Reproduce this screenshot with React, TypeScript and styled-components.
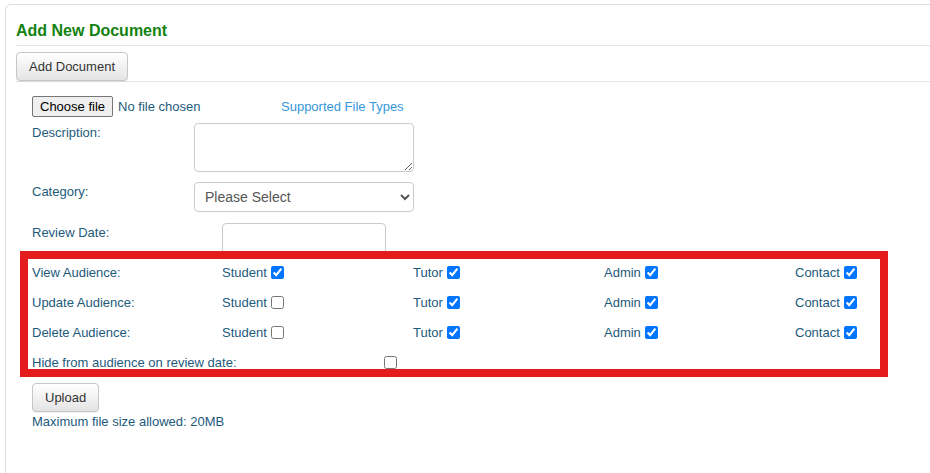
import styled, {createGlobalStyle} from "styled-components";

const GlobalStyle = createGlobalStyle`
    html, body {
        margin: 0;
        padding: 0;
        background: #fff;
        overflow: hidden;
    }

    body {
        font-family: "Liberation Sans", Arial, sans-serif;
        font-size: 13px;
        color: #1d5a7c;
    }
`;

const Panel = styled.div`
    margin: 4px -20px 0 5px;
    min-height: 480px;
    border: 1px solid #dddddd;
    border-radius: 6px;
    background: #fff;
`;

const Header = styled.div`
    margin-left: 10px;
    padding: 17px 0 5px;
    border-bottom: 1px solid #e5e5e5;
`;

const Title = styled.h2`
    margin: 0;
    font-size: 16px;
    line-height: 18px;
    font-weight: 700;
    color: #13820f;
`;

const Toolbar = styled.div`
    margin-left: 10px;
    padding-top: 6px;
    border-bottom: 1px solid #e5e5e5;
    line-height: 0;
`;

const Button = styled.button`
    font-family: "Liberation Sans", Arial, sans-serif;
    font-size: 13px;
    line-height: 15px;
    color: #333;
    padding: 6px 12px;
    border: 1px solid #c6c6c6;
    border-radius: 4px;
    background: linear-gradient(#ffffff, #e4e4e4);
    box-shadow: 0 1px 1px rgba(0, 0, 0, 0.06);
    cursor: pointer;
`;

const Form = styled.form`
    padding: 14px 0 0 26px;
`;

const Row = styled.div<{$gap: number}>`
    display: flex;
    align-items: flex-start;
    margin-top: ${p => p.$gap}px;
`;

const Label = styled.label<{$width: number}>`
    flex: 0 0 ${p => p.$width}px;
    padding-top: 2px;
    line-height: 15px;
`;

const FilePicker = styled.label`
    flex: 0 0 249px;
    display: flex;
    align-items: center;
    height: 21px;

    input {
        display: none;
    }
`;

const FileButton = styled.span`
    display: inline-block;
    padding: 2px 7px;
    line-height: 15px;
    color: #000;
    background: #efefef;
    border: 1px solid #767676;
    border-radius: 2px;
    margin-right: 5px;
`;

const Link = styled.a`
    color: #3598db;
    text-decoration: none;
    line-height: 21px;
`;

const TextArea = styled.textarea`
    width: 220px;
    height: 49px;
    box-sizing: border-box;
    border: 1px solid #cccccc;
    border-radius: 4px;
    padding: 4px 8px;
    font-family: "Liberation Sans", Arial, sans-serif;
    font-size: 14px;
    margin: 0;
`;

const Select = styled.select`
    width: 220px;
    height: 30px;
    box-sizing: border-box;
    border: 1px solid #cccccc;
    border-radius: 4px;
    padding: 0 6px;
    font-family: "Liberation Sans", Arial, sans-serif;
    font-size: 14px;
    color: #555;
    background: #fff;
`;

const TextInput = styled.input`
    width: 164px;
    height: 30px;
    box-sizing: border-box;
    border: 1px solid #cccccc;
    border-radius: 4px;
    padding: 0 8px;
    margin: 0;
`;

const Highlight = styled.div`
    position: relative;
    margin: -2px 61px 0 -12px;
    height: 126px;
    box-sizing: border-box;
    border: 8px solid #e41c1c;
`;

const AudienceGrid = styled.div`
    display: grid;
    grid-template-columns: 190px 191px 191px 191px auto;
    grid-auto-rows: 30px;
    align-items: center;
    margin-top: -2px;
    padding-left: 4px;
`;

const Cell = styled.div`
    display: flex;
    align-items: center;
    white-space: nowrap;
`;

const HideCell = styled(Cell)`
    grid-column: 1 / 4;
`;

const HideLabel = styled.span`
    width: 352px;
`;

const Check = styled.input.attrs({type: "checkbox"})`
    width: 13px;
    height: 13px;
    margin: 1px 0 0 4px;
`;

const HideCheck = styled(Check)`
    margin-left: 0;
`;

const UploadBar = styled.div`
    margin-top: 6px;
    line-height: 0;
`;

const Note = styled.div`
    margin-top: 2px;
    line-height: 15px;
`;

type Audience = {label: string; checks: boolean[]};

const roles = ["Student", "Tutor", "Admin", "Contact"];

const audiences: Audience[] = [
    {label: "View Audience:", checks: [true, true, true, true]},
    {label: "Update Audience:", checks: [false, true, true, true]},
    {label: "Delete Audience:", checks: [false, true, true, true]},
];

export default function App() {
    return (
        <>
            <GlobalStyle />
            <Panel>
                <Header>
                    <Title>Add New Document</Title>
                </Header>
                <Toolbar>
                    <Button type="button">Add Document</Button>
                </Toolbar>
                <Form onSubmit={e => e.preventDefault()}>
                    <Row $gap={0}>
                        <FilePicker>
                            <input type="file" />
                            <FileButton>Choose file</FileButton>
                            No file chosen
                        </FilePicker>
                        <Link href="#">Supported File Types</Link>
                    </Row>
                    <Row $gap={6}>
                        <Label $width={162}>Description:</Label>
                        <TextArea />
                    </Row>
                    <Row $gap={10}>
                        <Label $width={162}>Category:</Label>
                        <Select defaultValue="">
                            <option value="">Please Select</option>
                        </Select>
                    </Row>
                    <Row $gap={11}>
                        <Label $width={190}>Review Date:</Label>
                        <TextInput type="text" />
                    </Row>
                    <Highlight>
                        <AudienceGrid>
                            {audiences.map(a => (
                                <>
                                    <Cell key={a.label}>{a.label}</Cell>
                                    {roles.map((r, i) => (
                                        <Cell key={a.label + r}>
                                            {r}
                                            <Check defaultChecked={a.checks[i]} />
                                        </Cell>
                                    ))}
                                </>
                            ))}
                            <HideCell>
                                <HideLabel>Hide from audience on review date:</HideLabel>
                                <HideCheck />
                            </HideCell>
                        </AudienceGrid>
                    </Highlight>
                    <UploadBar>
                        <Button type="submit">Upload</Button>
                    </UploadBar>
                    <Note>Maximum file size allowed: 20MB</Note>
                </Form>
            </Panel>
        </>
    );
}
